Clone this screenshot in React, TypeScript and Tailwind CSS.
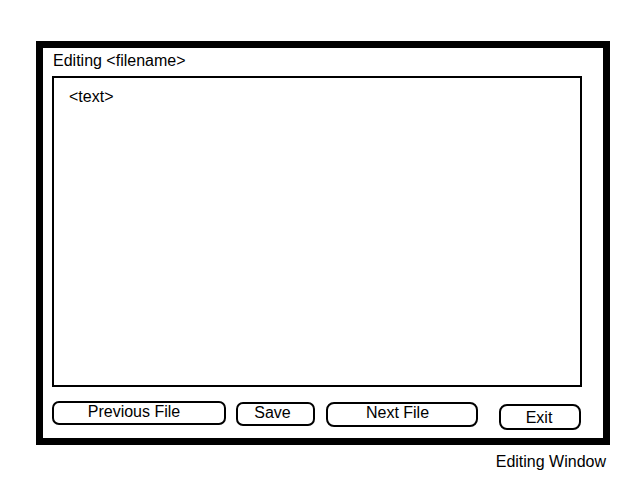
import React from "react";

export default function App() {
  return (
    <div className="w-[640px] h-[480px] bg-white text-black font-['Liberation_Sans',Arial,sans-serif] text-[16px] leading-[18px]">
      <div className="pl-[36px] pt-[41px]">
        <div className="w-[574px] h-[404px] border-[7px] border-black flex flex-col pl-[9px] pt-[4px]">
          <div className="h-[18px] pl-[1px]">Editing &lt;filename&gt;</div>
          <div className="mt-[6px] w-[530px] h-[311px] border-2 border-black pl-[15px] pt-[10px]">
            &lt;text&gt;
          </div>
          <div className="mt-[14px] flex items-start">
            <div className="w-[174px] h-[24px] border-2 border-black rounded-[7px] flex justify-center pr-[10px]">
              Previous File
            </div>
            <div className="ml-[10px] mt-[1px] w-[79px] h-[24px] border-2 border-black rounded-[7px] flex justify-center pr-[6px]">
              Save
            </div>
            <div className="ml-[11px] mt-[1px] w-[152px] h-[25px] border-2 border-black rounded-[8px] flex justify-center pr-[9px]">
              Next File
            </div>
            <div className="ml-[21px] mt-[3px] w-[82px] h-[26px] border-2 border-black rounded-[8px] flex justify-center pt-[3px] pr-[2px]">
              Exit
            </div>
          </div>
        </div>
      </div>
      <div className="flex justify-end pr-[34px] mt-[8px]">Editing Window</div>
    </div>
  );
}
